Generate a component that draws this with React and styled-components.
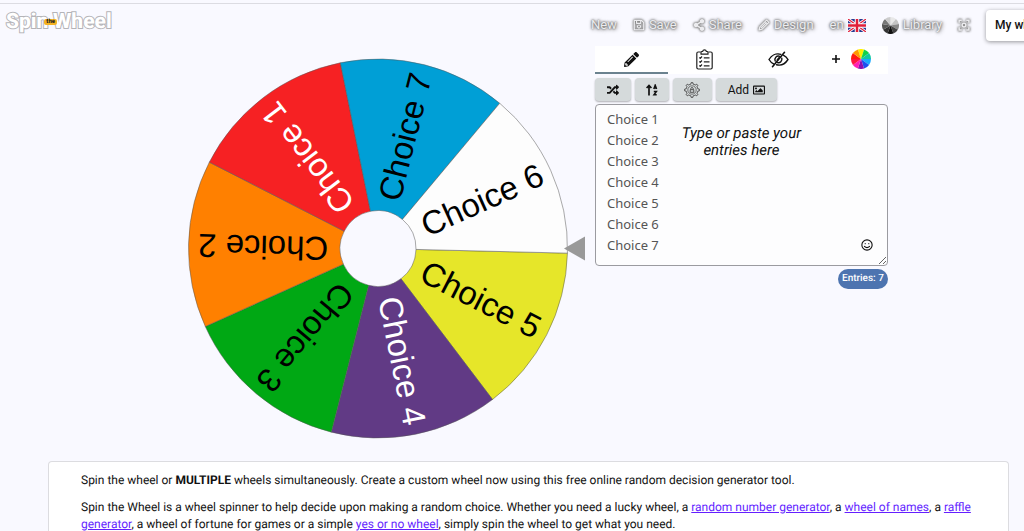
import React from "react";
import styled, { createGlobalStyle, css } from "styled-components";
import {
  FaPencilAlt,
  FaRandom,
  FaRegSave,
  FaShareAlt,
  FaRegImage,
} from "react-icons/fa";

const GlobalStyle = createGlobalStyle`
  *, *::before, *::after { box-sizing: border-box; }
  body {
    margin: 0;
    background: #f9f9ff;
    color: #111;
    font-family: Roboto, "Liberation Sans", sans-serif;
    font-size: 12px;
    text-rendering: geometricPrecision;
  }
  button, textarea { font: inherit; color: inherit; margin: 0; }
  button { border: 0; background: none; padding: 0; cursor: pointer; }
`;

const Page = styled.div`
  display: flex;
  flex-direction: column;
  min-height: 100vh;
  overflow: hidden;
  padding-top: 3px;
`;

const columns = css`
  display: grid;
  grid-template-columns: minmax(0, 581fr) minmax(0, 419fr);
`;

const Header = styled.header`
  ${columns}
  border-top: 1px solid #dcdce2;
  height: 43px;
  align-items: center;
`;

const Logo = styled.a`
  display: flex;
  align-items: center;
  padding-left: 6px;
  margin-top: -6px;
  color: #fff;
  font-size: 21px;
  line-height: 24px;
  font-weight: 800;
  text-decoration: none;
  -webkit-text-stroke: 2px #b4b4b8;
  paint-order: stroke fill;
`;

const LogoTag = styled.span`
  position: relative;
  z-index: 1;
  margin: 0 -4px;
  padding: 0 2px;
  border-radius: 2px;
  background: #f5b321;
  color: #222;
  font-size: 6px;
  line-height: 6px;
  -webkit-text-stroke: 0;
`;

const Nav = styled.nav`
  display: flex;
  align-items: center;
  gap: 16px;
  margin-left: -4px;
  white-space: nowrap;
`;

const NavItem = styled.button`
  display: flex;
  flex: none;
  align-items: center;
  gap: 4px;
  color: #ececef;
  font-size: 13px;
  line-height: 20px;
  text-shadow: 0 0 2px #666, 0 0 3px #777, 1px 1px 4px #888;

  svg { flex: none; }
`;

const NavIcon = styled.span`
  display: flex;
  filter: drop-shadow(0 0 1px #777) drop-shadow(0 0 1px #888);
`;

const WheelsButton = styled.button`
  flex: none;
  height: 31px;
  padding: 0 9px;
  border-radius: 4px;
  background: #fff;
  box-shadow: 0 1px 4px rgba(0, 0, 0, 0.4);
  font-size: 12px;
  font-weight: 500;
`;

const Main = styled.main`
  ${columns}
  align-items: start;
`;

const WheelArea = styled.section`
  display: flex;
  justify-content: flex-end;
  padding: 11px 10px 0 0;

  svg { width: 100%; max-width: 398px; height: auto; }
`;

const Panel = styled.section`
  display: flex;
  flex-direction: column;
  width: 100%;
  max-width: 293px;
`;

const Tabs = styled.div`
  display: grid;
  grid-template-columns: repeat(4, 1fr);
  height: 28px;
  background: #fff;
`;

const Tab = styled.button`
  display: flex;
  align-items: center;
  justify-content: center;
  gap: 10px;
  border-bottom: 2px solid ${(p) => (p.$active ? "#6b828f" : "transparent")};
`;

const Toolbar = styled.div`
  display: flex;
  gap: 4px;
  padding: 4px 0 3px;
`;

const Tool = styled.button`
  display: flex;
  align-items: center;
  justify-content: center;
  gap: 4px;
  height: 23px;
  width: ${(p) => p.$width};
  border-radius: 4px;
  background: #d5dadb;
  box-shadow: 0 1px 2px rgba(0, 0, 0, 0.3);
`;

const EntriesBox = styled.div`
  position: relative;
  display: flex;
`;

const Entries = styled.textarea`
  width: 100%;
  height: 162px;
  padding: 4px 11px;
  border: 1px solid #9b9ba0;
  border-radius: 4px;
  background: #fdfdfe;
  color: #555;
  font-family: "Noto Sans", "Open Sans", sans-serif;
  font-size: 13px;
  line-height: 21px;
  resize: vertical;
  outline: 0;
  overflow: hidden;
`;

const Hint = styled.div`
  position: absolute;
  top: 21px;
  left: 0;
  right: 0;
  width: 140px;
  margin: 0 auto;
  text-align: center;
  font-size: 15px;
  font-style: italic;
  line-height: 17px;
  pointer-events: none;
`;

const Emoji = styled.button`
  position: absolute;
  right: 15px;
  bottom: 15px;
  display: flex;
`;

const Count = styled.output`
  align-self: flex-end;
  margin-top: 3px;
  padding: 0 4px;
  border-radius: 10px;
  background: #4d74b0;
  color: #fff;
  font-size: 10px;
  font-weight: 500;
  line-height: 20px;
`;

const Article = styled.article`
  flex: 1;
  margin: 22px 15px 0 48px;
  padding: 10px 32px 0;
  border: 1px solid #dcdce0;
  border-bottom: 0;
  border-radius: 4px 4px 0 0;
  background: #fff;
  line-height: 17px;

  p { margin: 0 0 10px; }
  p:last-child { margin: 0; }
`;

const Link = styled.a`
  color: #651fff;
`;

const SLICES = [
  { label: "Choice 5", fill: "#e6e629", ink: "#000" },
  { label: "Choice 4", fill: "#613a85", ink: "#fff" },
  { label: "Choice 3", fill: "#00a814", ink: "#000" },
  { label: "Choice 2", fill: "#ff8000", ink: "#000" },
  { label: "Choice 1", fill: "#f62123", ink: "#fff" },
  { label: "Choice 7", fill: "#009fd6", ink: "#000" },
  { label: "Choice 6", fill: "#fdfdfd", ink: "#000" },
];

const STEP = 360 / SLICES.length;
const START = 1.4;

function point(cx, cy, r, deg) {
  const a = (deg * Math.PI) / 180;
  return `${(cx + r * Math.cos(a)).toFixed(2)} ${(cy + r * Math.sin(a)).toFixed(2)}`;
}

function ring(cx, cy, inner, outer, from, to) {
  return `M${point(cx, cy, inner, from)}L${point(cx, cy, outer, from)}A${outer} ${outer} 0 0 1 ${point(cx, cy, outer, to)}L${point(cx, cy, inner, to)}A${inner} ${inner} 0 0 0 ${point(cx, cy, inner, from)}Z`;
}

function Wheel() {
  return (
    <svg viewBox="0 0 398 382" role="img" aria-label="Wheel with seven choices">
      {SLICES.map((s, i) => {
        const from = START + i * STEP;
        return (
          <g key={s.label}>
            <path
              d={ring(191, 191.5, 38, 189.5, from, from + STEP)}
              fill={s.fill}
              stroke="#555"
              strokeOpacity="0.5"
              strokeWidth="1"
            />
            <text
              transform={`translate(191 191.5) rotate(${from + STEP / 2})`}
              x="180"
              y="10"
              textAnchor="end"
              fontFamily="Liberation Sans, Arial, sans-serif"
              fontSize="33"
              fill={s.ink}
            >
              {s.label}
            </text>
          </g>
        );
      })}
      <path d="M377 191.500L398 179.500V203.500Z" fill="#999" />
    </svg>
  );
}

function MiniWheel({ colors, size, start = -90 }) {
  const step = 360 / colors.length;
  return (
    <svg width={size} height={size} viewBox="0 0 20 20" aria-hidden="true">
      {colors.map((c, i) => (
        <path
          key={i}
          d={`M10 10L${point(10, 10, 10, i * step + start)}A10 10 0 0 1 ${point(10, 10, 10, (i + 1) * step + start)}Z`}
          fill={c}
        />
      ))}
    </svg>
  );
}

const RAINBOW = ["#fff000", "#12d24a", "#10c8a0", "#18a8ff", "#1c50f0", "#8a10b0", "#ff1fb4", "#ff1440", "#ff1a10", "#ff9800"];
const GREYS = ["#e8e8e8", "#c4c4c4", "#888", "#444", "#111", "#333", "#555", "#777", "#ccc"];

function Flag() {
  return (
    <svg width="18" height="13" viewBox="0 0 36 26" aria-hidden="true">
      <path d="M0 0H36V26H0Z" fill="#283a90" />
      <path d="M0 0L36 26M36 0L0 26" stroke="#fff" strokeWidth="6" />
      <path d="M0 0L36 26M36 0L0 26" stroke="#e0203a" strokeWidth="2.500" />
      <path d="M18 0V26M0 13H36" stroke="#fff" strokeWidth="9" />
      <path d="M18 0V26M0 13H36" stroke="#e0203a" strokeWidth="5" />
    </svg>
  );
}

function OutlinePencil() {
  return (
    <svg width="12" height="12" viewBox="0 0 16 16" fill="none" stroke="currentColor" strokeWidth="1.800" strokeLinejoin="round" aria-hidden="true">
      <path d="M1.500 14.500L2.500 10.500L11.500 1.500L14.500 4.500L5.500 13.500ZM9.500 3.500L12.500 6.500M4 12L10.500 5.500" />
    </svg>
  );
}

function FocusFrame() {
  return (
    <svg width="12" height="12" viewBox="0 0 16 16" fill="none" stroke="currentColor" strokeWidth="2" aria-hidden="true">
      <path d="M1.500 5V1.500H5M11 1.500H14.500V5M14.500 11V14.500H11M5 14.500H1.500V11" />
      <circle cx="8" cy="8" r="2.500" />
    </svg>
  );
}

function Checklist() {
  return (
    <svg width="17" height="21" viewBox="0 0 17 21" fill="none" stroke="#222" strokeWidth="1.200" strokeLinejoin="round" aria-hidden="true">
      <path d="M4.500 3H2.200Q.8 3 .8 4.400V18.600Q.8 20 2.200 20H14.800Q16.200 20 16.200 18.600V4.400Q16.200 3 14.800 3H12.500" />
      <path d="M5 5.200V3.200Q5 2.500 6 2.500H6.600Q7 .8 8.500 .8T10.400 2.500H11Q12 2.500 12 3.200V5.200Z" />
      <path d="M3.300 8.500L4.300 9.400L6 7.500M3.300 12.500L4.300 13.400L6 11.500M3.300 16.500L4.300 17.400L6 15.500M7.800 8.800H13.500M7.800 12.800H13.500M7.800 16.800H13.500" />
    </svg>
  );
}

function HiddenEye() {
  return (
    <svg width="21" height="17" viewBox="0 0 21 17" fill="none" stroke="#111" strokeWidth="1.400" strokeLinecap="round" aria-hidden="true">
      <path d="M12.800 3.400C8 1.900 3.500 4.500 1 8.500C2.200 10.500 3.800 12 5.600 12.900M15.600 4.300C17.400 5.200 18.900 6.700 20 8.500C17.300 12.700 13 14.900 8.500 13.700" />
      <path d="M11.800 5.300C8.500 4.300 6 7 7.200 10M13.800 7.200C14.500 10 12 12.300 9.500 11.600" />
      <path d="M16.500 1.300L4.500 15.700" strokeWidth="1.600" />
      <path d="M11 6.800L9.200 9" />
    </svg>
  );
}

function SortIcon() {
  return (
    <svg width="12" height="12" viewBox="0 0 12 12" fill="none" stroke="#111" strokeWidth="1.700" aria-hidden="true">
      <path d="M3 11.500V1.500M.6 4L3 1.500L5.400 4" />
      <path d="M7.800 5L9.200 1.200L10.600 5M8.200 3.900H10.200M7.800 7.500H10.400L8 10.800H10.700" strokeWidth="1.500" />
    </svg>
  );
}

function GearLock() {
  const teeth = Array.from({ length: 8 }, (_, i) => i * 45);
  return (
    <svg width="16" height="16" viewBox="0 0 16 16" fill="none" stroke="#444" aria-hidden="true">
      {teeth.map((a) => (
        <path key={a} d="M5.700 2.500L6.800 2.200L7.200 .6H8.800L9.200 2.200L10.300 2.500" transform={`rotate(${a} 8 8)`} strokeWidth=".9" />
      ))}
      <circle cx="8" cy="8" r="4.200" strokeWidth=".7" />
      <path d="M6.800 7.500V6.300Q8 4.400 9.200 6.300V7.500M6.200 7.700H9.800V10.300H6.200Z" strokeWidth=".9" />
    </svg>
  );
}

function Smile() {
  return (
    <svg width="12" height="12" viewBox="0 0 14 14" fill="none" stroke="#111" strokeWidth="1.300" strokeLinecap="round" aria-hidden="true">
      <circle cx="7" cy="7" r="6" />
      <path d="M4 8.500Q7 11.500 10 8.500M4.900 5.200V5.500M9.100 5.200V5.500" />
    </svg>
  );
}

const ENTRIES = Array.from({ length: 7 }, (_, i) => `Choice ${i + 1}`);

export default function App() {
  return (
    <>
      <GlobalStyle />
      <Page>
        <Header>
          <Logo href="#">
            <span>Spin</span>
            <LogoTag>the</LogoTag>
            <span>Wheel</span>
          </Logo>
          <Nav>
            <NavItem>New</NavItem>
            <NavItem><NavIcon><FaRegSave size={12} /></NavIcon>Save</NavItem>
            <NavItem><NavIcon><FaShareAlt size={12} /></NavIcon>Share</NavItem>
            <NavItem><NavIcon><OutlinePencil /></NavIcon>Design</NavItem>
            <NavItem>en<Flag /></NavItem>
            <NavItem><MiniWheel colors={GREYS} size={17} />Library</NavItem>
            <NavItem aria-label="Full screen"><NavIcon><FocusFrame /></NavIcon></NavItem>
            <WheelsButton>My wheels</WheelsButton>
          </Nav>
        </Header>
        <Main>
          <WheelArea><Wheel /></WheelArea>
          <Panel>
            <Tabs role="tablist">
              <Tab role="tab" $active aria-selected="true" aria-label="Edit entries"><FaPencilAlt size={15} /></Tab>
              <Tab role="tab" aria-selected="false" aria-label="Results"><Checklist /></Tab>
              <Tab role="tab" aria-selected="false" aria-label="Hidden entries"><HiddenEye /></Tab>
              <Tab role="tab" aria-selected="false" aria-label="Add wheel">
                <svg width="10" height="10" viewBox="0 0 10 10" stroke="#111" strokeWidth="1.600" aria-hidden="true"><path d="M5 1V9M1 5H9" /></svg>
                <MiniWheel colors={RAINBOW} size={20} start={-108} />
              </Tab>
            </Tabs>
            <Toolbar>
              <Tool $width="36px" aria-label="Shuffle"><FaRandom size={12} /></Tool>
              <Tool $width="34px" aria-label="Sort"><SortIcon /></Tool>
              <Tool $width="39px" aria-label="Settings"><GearLock /></Tool>
              <Tool $width="61px">Add <FaRegImage size={12} /></Tool>
            </Toolbar>
            <EntriesBox>
              <Entries aria-label="Wheel entries" spellCheck={false} defaultValue={ENTRIES.join("\n")} />
              <Hint>Type or paste your entries here</Hint>
              <Emoji aria-label="Insert emoji"><Smile /></Emoji>
            </EntriesBox>
            <Count>Entries: 7</Count>
          </Panel>
        </Main>
        <Article>
          <p>
            Spin the wheel or <strong>MULTIPLE</strong> wheels simultaneously. Create a custom wheel now using this free online random decision generator tool.
          </p>
          <p>
            Spin the Wheel is a wheel spinner to help decide upon making a random choice. Whether you need a lucky wheel, a <Link href="#">random number generator</Link>, a <Link href="#">wheel of names</Link>, a <Link href="#">raffle generator</Link>, a wheel of fortune for games or a simple <Link href="#">yes or no wheel</Link>, simply spin the wheel to get what you need.
          </p>
        </Article>
      </Page>
    </>
  );
}
